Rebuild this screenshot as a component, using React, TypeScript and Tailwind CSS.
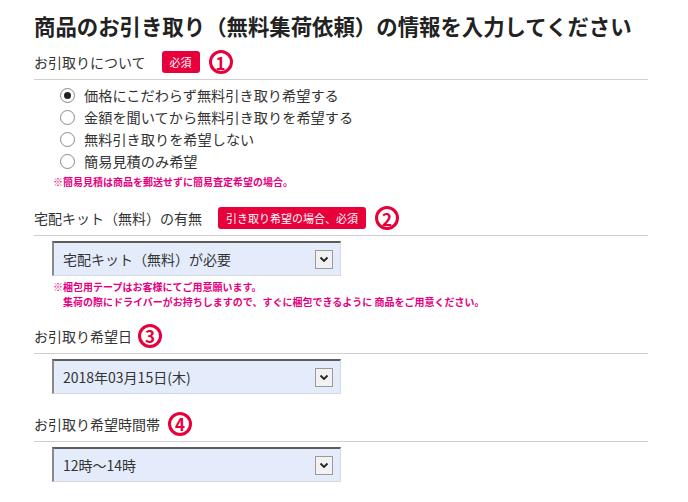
import React from "react";

function Circled({ n }: { n: string }) {
  return (
    <span className="inline-flex w-[24px] h-[24px] rounded-full border-[3px] border-[#e8003a] text-[#e8003a] font-bold text-[17px] leading-none items-center justify-center">
      {n}
    </span>
  );
}

function Badge({ children }: { children: React.ReactNode }) {
  return (
    <span className="inline-flex h-[22px] items-center px-[8px] rounded-[3px] bg-[#e8003a] text-white text-[11px] leading-none">
      {children}
    </span>
  );
}

function Header({
  label,
  badge,
  num,
  mt,
  gap,
}: {
  label: string;
  badge?: string;
  num: string;
  mt: string;
  gap: string;
}) {
  return (
    <div className={`${mt} border-b border-[#cfcfcf] pb-[6px]`}>
      <div className="flex items-center h-[22px]">
        <span className="text-[14px] text-[#333] leading-none">{label}</span>
        {badge ? (
          <span className="ml-[16px] flex items-center gap-[9px]">
            <Badge>{badge}</Badge>
            <Circled n={num} />
          </span>
        ) : (
          <span className={gap}>
            <Circled n={num} />
          </span>
        )}
      </div>
    </div>
  );
}

function Radio({ label, checked }: { label: string; checked?: boolean }) {
  return (
    <div className="flex items-center h-[22px] pl-[26px]">
      <span className="w-[15px] h-[15px] rounded-full border border-[#8a8a8a] bg-white flex items-center justify-center">
        {checked && <span className="w-[7px] h-[7px] rounded-full bg-[#222]" />}
      </span>
      <span className="ml-[9px] text-[14.2px] text-[#333] leading-none">{label}</span>
    </div>
  );
}

function Select({ value, mt }: { value: string; mt: string }) {
  return (
    <div
      className={`${mt} ml-[18px] w-[289px] h-[35px] bg-[#e4ecfb] border-t-2 border-l-2 border-r border-b border-t-[#5c5c5c] border-l-[#8a8a8a] border-r-[#d6dbe3] border-b-[#d6dbe3] flex items-center pl-[9px] pr-[7px]`}
    >
      <span className="flex-1 text-[14px] text-[#333] leading-none">{value}</span>
      <span className="w-[18px] h-[19px] bg-[#f2f2f2] border border-[#9a9a9a] flex items-center justify-center">
        <svg width="10" height="7" viewBox="0 0 10 7">
          <path d="M1.5 1.5 L5 5 L8.5 1.5" fill="none" stroke="#222" strokeWidth="1.8" />
        </svg>
      </span>
    </div>
  );
}

export default function App() {
  return (
    <div
      className="w-[688px] h-[502px] bg-white pl-[34px] pr-[40px] overflow-hidden"
      style={{ fontFamily: '"Noto Sans CJK JP", "Noto Sans", sans-serif' }}
    >
      <h1 className="pt-[12px] h-[40px] text-[21.4px] leading-[28px] font-bold text-[#222] whitespace-nowrap">
        商品のお引き取り（無料集荷依頼）の情報を入力してください
      </h1>

      <Header label="お引取りについて" badge="必須" num="1" mt="mt-[11px]" gap="" />
      <div className="mt-[4px]">
        <Radio label="価格にこだわらず無料引き取り希望する" checked />
        <Radio label="金額を聞いてから無料引き取りを希望する" />
        <Radio label="無料引き取りを希望しない" />
        <Radio label="簡易見積のみ希望" />
      </div>
      <div className="mt-[3px] h-[14px] pl-[19px] text-[10px] leading-[14px] font-bold text-[#e4007f]">
        ※簡易見積は商品を郵送せずに簡易査定希望の場合。
      </div>

      <Header
        label="宅配キット（無料）の有無"
        badge="引き取り希望の場合、必須"
        num="2"
        mt="mt-[18px]"
        gap=""
      />
      <Select value="宅配キット（無料）が必要" mt="mt-[5px]" />
      <div className="mt-[3px] pl-[19px] text-[10px] leading-[15px] font-bold text-[#e4007f]">
        <div>※梱包用テープはお客様にてご用意願います。</div>
        <div className="pl-[10px]">
          集荷の際にドライバーがお持ちしますので、すぐに梱包できるように 商品をご用意ください。
        </div>
      </div>

      <Header label="お引取り希望日" num="3" mt="mt-[16px]" gap="ml-[6px]" />
      <Select value="2018年03月15日(木)" mt="mt-[5px]" />

      <Header label="お引取り希望時間帯" num="4" mt="mt-[19px]" gap="ml-[8px]" />
      <Select value="12時～14時" mt="mt-[5px]" />
    </div>
  );
}
